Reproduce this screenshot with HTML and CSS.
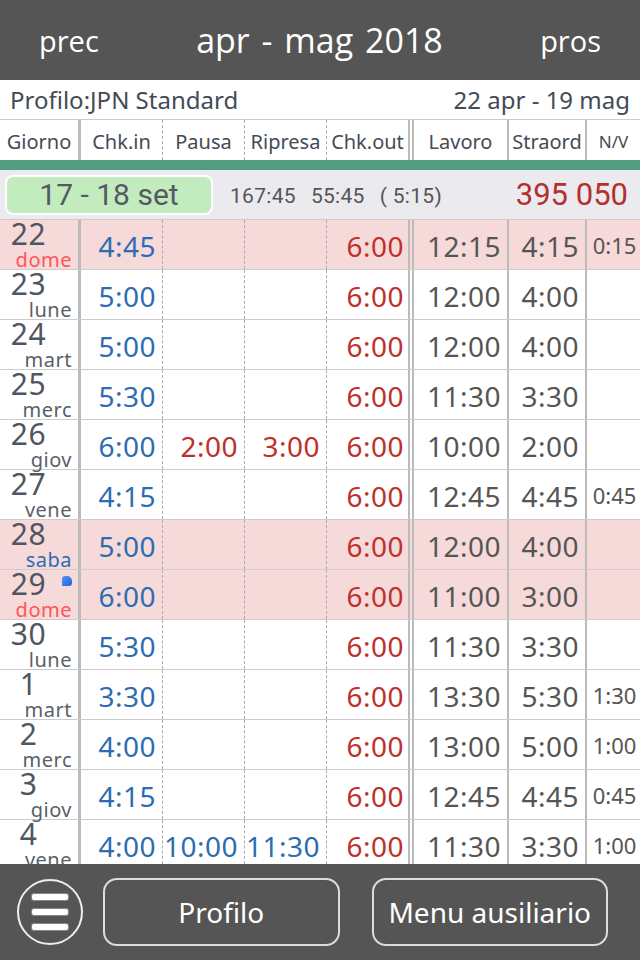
FILE: index.html
```html
<!DOCTYPE html>
<html lang="it">
<head>
    <meta charset="UTF-8">
    <meta name="viewport" content="width=device-width, initial-scale=1.0">
    <title>Turni apr - mag 2018</title>
    <link rel="stylesheet" href="styles.css">
</head>
<body>
<div class="app">

    <div class="topbar">
        <span class="nav">prec</span>
        <span class="title">apr - mag 2018</span>
        <span class="nav">pros</span>
    </div>

    <div class="profile-row">
        <span>Profilo:JPN Standard</span>
        <span>22 apr - 19 mag</span>
    </div>

    <div class="grid head">
        <div class="c day">Giorno</div>
        <div class="c dash">Chk.in</div>
        <div class="c dash">Pausa</div>
        <div class="c dash">Ripresa</div>
        <div class="c dbl">Chk.out</div>
        <div class="c solid">Lavoro</div>
        <div class="c solid">Straord</div>
        <div class="c nv">N/V</div>
    </div>

    <div class="green-line"></div>

    <div class="summary">
        <div class="pill">17 - 18 set</div>
        <div class="totals">
            <span>167:45</span>
            <span>55:45</span>
            <span>( 5:15)</span>
        </div>
        <div class="amount">395 050</div>
    </div>

    <div class="rows">
        <div class="grid row holiday">
            <div class="c day"><span class="num">22</span><span class="dn sun">dome</span></div>
            <div class="c dash in">4:45</div><div class="c dash"></div><div class="c dash"></div>
            <div class="c dbl out">6:00</div><div class="c solid">12:15</div><div class="c solid">4:15</div><div class="c nv">0:15</div>
        </div>
        <div class="grid row">
            <div class="c day"><span class="num">23</span><span class="dn">lune</span></div>
            <div class="c dash in">5:00</div><div class="c dash"></div><div class="c dash"></div>
            <div class="c dbl out">6:00</div><div class="c solid">12:00</div><div class="c solid">4:00</div><div class="c nv"></div>
        </div>
        <div class="grid row">
            <div class="c day"><span class="num">24</span><span class="dn">mart</span></div>
            <div class="c dash in">5:00</div><div class="c dash"></div><div class="c dash"></div>
            <div class="c dbl out">6:00</div><div class="c solid">12:00</div><div class="c solid">4:00</div><div class="c nv"></div>
        </div>
        <div class="grid row">
            <div class="c day"><span class="num">25</span><span class="dn">merc</span></div>
            <div class="c dash in">5:30</div><div class="c dash"></div><div class="c dash"></div>
            <div class="c dbl out">6:00</div><div class="c solid">11:30</div><div class="c solid">3:30</div><div class="c nv"></div>
        </div>
        <div class="grid row">
            <div class="c day"><span class="num">26</span><span class="dn">giov</span></div>
            <div class="c dash in">6:00</div><div class="c dash out">2:00</div><div class="c dash out">3:00</div>
            <div class="c dbl out">6:00</div><div class="c solid">10:00</div><div class="c solid">2:00</div><div class="c nv"></div>
        </div>
        <div class="grid row">
            <div class="c day"><span class="num">27</span><span class="dn">vene</span></div>
            <div class="c dash in">4:15</div><div class="c dash"></div><div class="c dash"></div>
            <div class="c dbl out">6:00</div><div class="c solid">12:45</div><div class="c solid">4:45</div><div class="c nv">0:45</div>
        </div>
        <div class="grid row holiday">
            <div class="c day"><span class="num">28</span><span class="dn sat">saba</span></div>
            <div class="c dash in">5:00</div><div class="c dash"></div><div class="c dash"></div>
            <div class="c dbl out">6:00</div><div class="c solid">12:00</div><div class="c solid">4:00</div><div class="c nv"></div>
        </div>
        <div class="grid row holiday">
            <div class="c day"><span class="num">29</span><span class="dn sun">dome</span><span class="marker"></span></div>
            <div class="c dash in">6:00</div><div class="c dash"></div><div class="c dash"></div>
            <div class="c dbl out">6:00</div><div class="c solid">11:00</div><div class="c solid">3:00</div><div class="c nv"></div>
        </div>
        <div class="grid row">
            <div class="c day"><span class="num">30</span><span class="dn">lune</span></div>
            <div class="c dash in">5:30</div><div class="c dash"></div><div class="c dash"></div>
            <div class="c dbl out">6:00</div><div class="c solid">11:30</div><div class="c solid">3:30</div><div class="c nv"></div>
        </div>
        <div class="grid row">
            <div class="c day"><span class="num">1</span><span class="dn">mart</span></div>
            <div class="c dash in">3:30</div><div class="c dash"></div><div class="c dash"></div>
            <div class="c dbl out">6:00</div><div class="c solid">13:30</div><div class="c solid">5:30</div><div class="c nv">1:30</div>
        </div>
        <div class="grid row">
            <div class="c day"><span class="num">2</span><span class="dn">merc</span></div>
            <div class="c dash in">4:00</div><div class="c dash"></div><div class="c dash"></div>
            <div class="c dbl out">6:00</div><div class="c solid">13:00</div><div class="c solid">5:00</div><div class="c nv">1:00</div>
        </div>
        <div class="grid row">
            <div class="c day"><span class="num">3</span><span class="dn">giov</span></div>
            <div class="c dash in">4:15</div><div class="c dash"></div><div class="c dash"></div>
            <div class="c dbl out">6:00</div><div class="c solid">12:45</div><div class="c solid">4:45</div><div class="c nv">0:45</div>
        </div>
        <div class="grid row">
            <div class="c day"><span class="num">4</span><span class="dn">vene</span></div>
            <div class="c dash in">4:00</div><div class="c dash in">10:00</div><div class="c dash in">11:30</div>
            <div class="c dbl out">6:00</div><div class="c solid">11:30</div><div class="c solid">3:30</div><div class="c nv">1:00</div>
        </div>
    </div>

    <div class="footer">
        <div class="menu-btn">
            <span></span><span></span><span></span>
        </div>
        <div class="btn">Profilo</div>
        <div class="btn">Menu ausiliario</div>
    </div>

</div>
</body>
</html>
```

FILE: styles.css
```css
body {
    margin: 0;
    font-family: "Noto Sans", "Open Sans", sans-serif;
    color: #555;
    background: #fff;
}

.app {
    width: 640px;
    height: 960px;
    display: flex;
    flex-direction: column;
    overflow: hidden;
}

/* top navigation */
.topbar {
    height: 80px;
    flex: none;
    background: #555;
    color: #fff;
    font-family: "Open Sans", sans-serif;
    display: flex;
    align-items: center;
    justify-content: space-between;
    padding: 0 39px 0 39px;
}

.topbar .nav {
    font-size: 29px;
}

.topbar .title {
    font-size: 34px;
    word-spacing: 3px;
}

.profile-row {
    height: 39px;
    flex: none;
    border-bottom: 1px solid #ccc;
    display: flex;
    align-items: center;
    justify-content: space-between;
    padding: 0 10px 0 10px;
    font-size: 24px;
    color: #444b55;
}

/* table columns */
.grid {
    display: grid;
    grid-template-columns: 81px 82px 82px 82px 87px 95px 78px 1fr;
}

.c {
    box-sizing: border-box;
    height: 100%;
}

.c.day {
    border-right: 3px solid #bbb;
}

.c.dash {
    border-right: 1px dashed #aaa;
}

.c.dbl {
    border-right: 6px double #bbb;
}

.c.solid {
    border-right: 2px solid #bbb;
}

.head {
    height: 40px;
    flex: none;
    font-size: 20px;
    color: #444b55;
}

.head .c {
    display: flex;
    align-items: center;
    justify-content: center;
    white-space: nowrap;
    padding-top: 3px;
}

.head .nv {
    font-size: 17px;
}

.green-line {
    height: 10px;
    flex: none;
    background: #519d80;
}

/* summary */
.summary {
    height: 49px;
    flex: none;
    background: #ebebef;
    border-bottom: 1px solid #ccc;
    display: flex;
    align-items: center;
    padding: 0 12px 0 5px;
    font-family: Roboto, sans-serif;
}

.pill {
    width: 204px;
    height: 36px;
    background: #c2ecbe;
    border: 2px solid #fff;
    border-radius: 8px;
    display: flex;
    align-items: center;
    justify-content: center;
    font-size: 30px;
    color: #555a62;
}

.totals {
    margin-left: 17px;
    padding-top: 3px;
    display: flex;
    gap: 15px;
    font-size: 21px;
    letter-spacing: 0.3px;
    color: #555;
}

.amount {
    margin-left: auto;
    font-size: 31px;
    color: #b3302c;
}

/* day rows */
.rows {
    flex: 1;
    overflow: hidden;
}

.row {
    height: 50px;
    box-sizing: border-box;
    border-bottom: 1px solid #ccc;
    font-size: 28px;
    color: #555;
}

.row.holiday {
    background: #f6dada;
}

.row .c {
    display: flex;
    align-items: center;
    justify-content: flex-end;
    padding: 2px 6px 0 0;
    line-height: 1;
    letter-spacing: 0.5px;
}

.row .c.dbl {
    padding-right: 4px;
}

.row .c.in {
    color: #2d6cb2;
}

.row .c.out {
    color: #c0302b;
}

.row .c.nv {
    justify-content: center;
    padding: 0 0 0 2px;
    font-size: 22px;
    letter-spacing: 0;
}

.row .c.day {
    position: relative;
    display: block;
    padding: 0;
}

.num {
    position: absolute;
    left: 0;
    width: 57px;
    text-align: center;
    top: 0;
    font-size: 30px;
    line-height: 28px;
    color: #505560;
}

.dn {
    position: absolute;
    right: 6px;
    bottom: 0;
    font-size: 20px;
    line-height: 19px;
    color: #5a5f68;
}

.dn.sun {
    color: #ff5555;
}

.dn.sat {
    color: #2d6cb2;
}

.marker {
    position: absolute;
    right: 6px;
    top: 6px;
    width: 10px;
    height: 10px;
    border-radius: 3px 5px 3px 0;
    background: linear-gradient(135deg, #5a94ff, #1f5fe0);
}

/* footer */
.footer {
    height: 96px;
    flex: none;
    background: #555;
    display: flex;
    align-items: center;
    padding: 0 32px 0 17px;
    gap: 20px;
}

.menu-btn {
    width: 66px;
    height: 66px;
    flex: none;
    box-sizing: border-box;
    border: 2px solid #eee;
    border-radius: 50%;
    display: flex;
    flex-direction: column;
    align-items: center;
    justify-content: center;
    gap: 9px;
}

.menu-btn span {
    width: 36px;
    height: 6px;
    background: #fff;
    border-radius: 2px;
    box-shadow: 0 0 0 1px #888;
}

.btn {
    flex: 1;
    height: 68px;
    box-sizing: border-box;
    border: 2px solid #ddd;
    border-radius: 14px;
    display: flex;
    align-items: center;
    justify-content: center;
    color: #fff;
    font-size: 28px;
}

.btn + .btn {
    margin-left: 12px;
}
```
